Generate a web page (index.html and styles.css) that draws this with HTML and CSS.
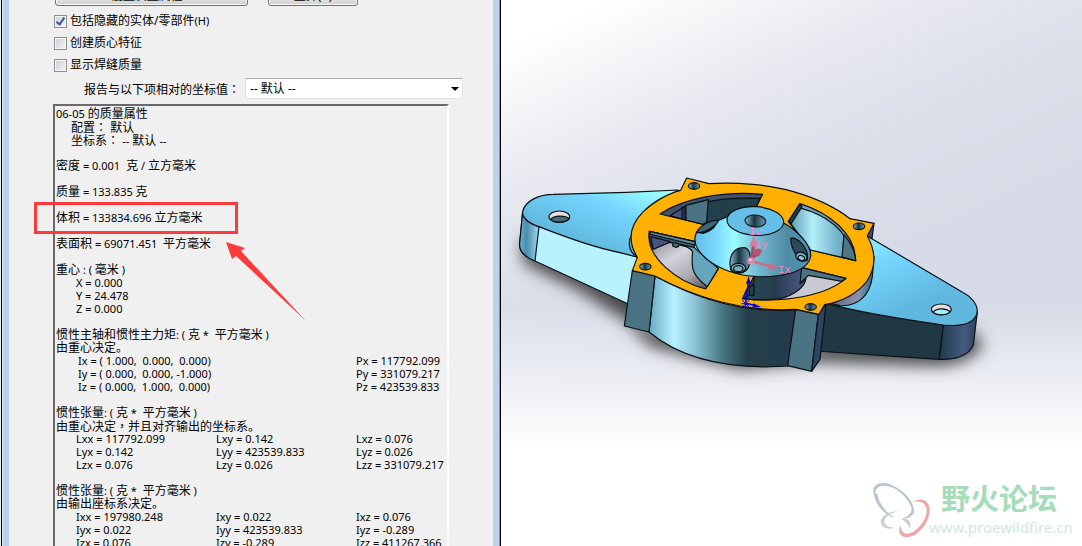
FILE: index.html
```html
<!DOCTYPE html>
<html lang="zh-CN">
<head>
<meta charset="utf-8">
<title>质量属性</title>
<link rel="stylesheet" href="styles.css">
</head>
<body>
<div class="window">
	<div class="dialog">
		<div class="buttons">
			<button type="button" class="btn btn-wide">覆盖质量属性...</button>
			<button type="button" class="btn">重算(R)</button>
		</div>
		<div class="options">
			<label class="check"><input type="checkbox" checked><span>包括隐藏的实体/零部件<span class="n">(H)</span></span></label>
			<label class="check"><input type="checkbox"><span>创建质心特征</span></label>
			<label class="check"><input type="checkbox"><span>显示焊缝质量</span></label>
		</div>
		<div class="coord">
			<label for="coordSys">报告与以下项相对的坐标值<span class="colon" lang="zh-TW">：</span></label>
			<div class="combo">
				<select id="coordSys"><option>-- 默认 --</option></select>
			</div>
		</div>
		<div class="report">
			<p><span class="n">06-05</span> 的质量属性</p>
			<p class="sub">配置<span class="colon" lang="zh-TW">：</span> 默认</p>
			<p class="sub">坐标系<span class="colon" lang="zh-TW">：</span> <span class="n">--</span> 默认 <span class="n">--</span></p>
			<p class="gap">密度<span class="n"> = 0.001 </span> 克<span class="n"> / </span>立方毫米</p>
			<p class="gap">质量<span class="n"> = 133.835 </span>克</p>
			<p class="gap marked">体积<span class="n"> = 133834.696 </span>立方毫米<svg class="arrow" width="82" height="82" viewBox="0 0 82 82"><path d="M0 0L19 6L15 9L80 79L10 14L6 17Z" fill="#fd3b3b"/></svg></p>
			<p class="gap">表面积<span class="n"> = 69071.451  </span>平方毫米</p>
			<p class="gap">重心<span class="n"> : ( </span>毫米<span class="n"> )</span></p>
			<p class="val n">X = 0.000</p>
			<p class="val n">Y = 24.478</p>
			<p class="val n">Z = 0.000</p>
			<p class="gap">惯性主轴和惯性主力矩<span class="n">: ( </span>克<span class="n"> *  </span>平方毫米<span class="n"> )</span></p>
			<p>由重心决定。</p>
			<table class="n axes">
				<tr><td>Ix = ( 1.000,  0.000,  0.000)</td><td>Px = 117792.099</td></tr>
				<tr><td>Iy = ( 0.000,  0.000, -1.000)</td><td>Py = 331079.217</td></tr>
				<tr><td>Iz = ( 0.000,  1.000,  0.000)</td><td>Pz = 423539.833</td></tr>
			</table>
			<p class="gap">惯性张量<span class="n">: ( </span>克<span class="n"> *  </span>平方毫米<span class="n"> )</span></p>
			<p>由重心决定<span class="colon" lang="zh-TW">，</span>并且对齐输出的坐标系。</p>
			<table class="n">
				<tr><td>Lxx = 117792.099</td><td>Lxy = 0.142</td><td>Lxz = 0.076</td></tr>
				<tr><td>Lyx = 0.142</td><td>Lyy = 423539.833</td><td>Lyz = 0.026</td></tr>
				<tr><td>Lzx = 0.076</td><td>Lzy = 0.026</td><td>Lzz = 331079.217</td></tr>
			</table>
			<p class="gap">惯性张量<span class="n">: ( </span>克<span class="n"> *  </span>平方毫米<span class="n"> )</span></p>
			<p>由输出座标系决定。</p>
			<table class="n">
				<tr><td>Ixx = 197980.248</td><td>Ixy = 0.022</td><td>Ixz = 0.076</td></tr>
				<tr><td>Iyx = 0.022</td><td>Iyy = 423539.833</td><td>Iyz = -0.289</td></tr>
				<tr><td>Izx = 0.076</td><td>Izy = -0.289</td><td>Izz = 411267.366</td></tr>
			</table>
		</div>
	</div>
	<div class="view">
		<svg class="model" viewBox="501 0 581 546" preserveAspectRatio="xMidYMid slice">
			<defs>
				<linearGradient id="wingL" x1="0" y1="1" x2="1" y2="0"><stop offset=".3" stop-color="#62b9de"/><stop offset=".65" stop-color="#74d4ff"/><stop offset=".9" stop-color="#98fbff"/></linearGradient>
				<linearGradient id="wingR" x1="0" y1="0" x2=".7" y2="1"><stop offset=".1" stop-color="#98fbff"/><stop offset=".38" stop-color="#76d6ff"/><stop offset=".8" stop-color="#60b8de"/></linearGradient>
				<linearGradient id="endL"><stop offset="0" stop-color="#69b3d2"/><stop offset=".35" stop-color="#4a8cac"/><stop offset="1" stop-color="#9bdcf2"/></linearGradient>
				<linearGradient id="endR"><stop offset="0" stop-color="#213a48"/><stop offset=".65" stop-color="#465a80"/><stop offset="1" stop-color="#2b4258"/></linearGradient>
				<linearGradient id="front"><stop offset="0" stop-color="#67a9c3"/><stop offset=".17" stop-color="#b7f1ff"/><stop offset=".3" stop-color="#90c9d9"/><stop offset=".5" stop-color="#487683"/><stop offset=".67" stop-color="#233f49"/><stop offset="1" stop-color="#243a4c"/></linearGradient>
				<linearGradient id="dome"><stop offset="0" stop-color="#62bde6"/><stop offset=".2" stop-color="#7ddcff"/><stop offset=".34" stop-color="#9bfdff"/><stop offset=".55" stop-color="#73b8d0"/><stop offset=".8" stop-color="#4f8aa3"/><stop offset="1" stop-color="#4f96bc"/></linearGradient>
				<linearGradient id="wallTR"><stop offset="0" stop-color="#5e9db4"/><stop offset=".35" stop-color="#b4eefb"/><stop offset=".7" stop-color="#76b7ce"/><stop offset="1" stop-color="#5b9cb9"/></linearGradient>
				<linearGradient id="hub"><stop offset="0" stop-color="#2b4a58"/><stop offset=".5" stop-color="#233d4c"/><stop offset=".75" stop-color="#3c4a6c"/><stop offset="1" stop-color="#4c5984"/></linearGradient>
				<linearGradient id="ground" x1="0" y1="0" x2=".8" y2="1"><stop offset="0" stop-color="#777"/><stop offset=".45" stop-color="#d3d3dc"/><stop offset=".75" stop-color="#aaaab2"/><stop offset="1" stop-color="#555"/></linearGradient>
				<linearGradient id="rim"><stop offset="0" stop-color="#505b78"/><stop offset=".7" stop-color="#8e93ad"/><stop offset=".8" stop-color="#5a87a0"/><stop offset="1" stop-color="#3b6a86"/></linearGradient>
				<linearGradient id="bore"><stop offset="0" stop-color="#89bdd0"/><stop offset=".45" stop-color="#1c3640"/><stop offset="1" stop-color="#6c9fb9"/></linearGradient>
				<filter id="soft" x="-20%" y="-50%" width="140%" height="200%"><feGaussianBlur stdDeviation="8"/></filter>
			</defs>

			<!-- shadow -->
			<g filter="url(#soft)">
				<path d="M521 238L650 290L640 330L578 290L524 264Z" fill="#484848"/>
				<path d="M815 345L968 330L983 342Q975 364 935 366L815 362L740 369L650 346L630 326Z" fill="#484848"/>
			</g>

			<!-- left arm -->
			<g class="edge" transform="translate(510 160) scale(.33333)">
				<path d="M38 155C38 178 62 192 87 200L385 292L370 440L350 430L75 303C42 290 27 272 29 250Z" fill="#b9f2ff"/>
				<path d="M38 155C38 178 62 192 87 200L75 303C42 290 27 272 29 250Z" fill="url(#endL)"/>
				<path d="M38 155C45 122 88 103 130 103L350 97L505 90L450 220L385 292L330 278C250 262 150 225 87 200C60 190 36 175 38 155Z" fill="url(#wingL)"/>
				<path d="M370 222C352 238 352 276 385 292L400 250Z" fill="#62aace"/>
				<ellipse cx="148" cy="170" rx="31" ry="17" fill="#e9dfe3"/>
				<path d="M122 178C132 166 165 165 177 176C170 188 133 190 122 178Z" fill="#42707e"/>
			</g>

			<!-- right arm -->
			<g class="edge" transform="translate(820 160) scale(.33333)">
				<path d="M0 415L18 430L370 495L358 598L-15 573Z" fill="#203744"/>
				<path d="M370 495C420 500 466 488 472 455L460 555C445 590 400 600 358 598Z" fill="url(#endR)"/>
				<path d="M120 215L430 398C462 415 480 445 468 468C455 492 420 500 370 495C250 478 130 460 18 430Z" fill="url(#wingR)"/>
				<path d="M162 190L156 236L138 226L142 205Z" fill="#34506f"/>
				<path d="M162 290L157 350C150 405 115 440 60 437L10 425L80 340Z" fill="url(#rim)"/>
				<ellipse cx="364" cy="448" rx="30" ry="16" fill="#e9dfe3"/>
				<path d="M339 456C350 444 376 443 391 455C380 467 350 468 339 456Z" fill="#a2f1fb"/>
			</g>

			<g class="edge" transform="translate(620 170) scale(.33333)">
				<!-- body walls -->
				<path d="M105 318C200 370 350 432 527 420L505 588C330 600 190 570 87 486Z" fill="url(#front)"/>
				<path d="M37 302L105 318L87 486L13 468Z" fill="#4a7484"/>
				<path d="M527 418L595 433L575 604L503 587Z" fill="#4a7484"/>
				<path d="M595 433L618 402L600 568L575 604Z" fill="#2c4563"/>

				<!-- cut face -->
				<path d="M200 24L267 41C350 35 450 45 520 65C600 88 650 115 690 146L762 160L742 198C768 245 770 290 740 335C710 372 665 395 614 404L597 433L527 418C360 428 210 375 105 318L37 302L52 262C20 210 30 165 70 125C100 95 145 70 182 61Z" fill="#ffb000"/>

				<!-- rear left opening -->
				<path d="M120 132C190 85 310 62 428 73L410 108C370 108 330 125 322 140L295 160L257 165Z" fill="#3f5369"/>
				<path d="M150 137C210 100 300 80 420 85L410 108C370 108 330 125 322 140L295 160L250 162Z" fill="#233f4c"/>
				<path d="M150 137L198 107L198 150Z" fill="#46557f"/>
				<path d="M198 106L265 89L260 155L250 163L198 150Z" fill="#4a7484"/>
				<path d="M186 110V146M192 108V148" fill="none"/>

				<!-- rear right opening -->
				<path d="M540 101C630 130 705 190 707 272L572 240L505 155Z" fill="#72aabb"/>
				<path d="M537 113C620 135 680 180 698 254L707 272L572 240L510 158Z" fill="url(#wallTR)"/>
				<path d="M672 194C690 215 705 240 707 272L666 261Z" fill="#4a7885"/>
				<path d="M540 101L546 110L514 160L505 155Z" fill="#20404f"/>

				<!-- front left opening -->
				<path d="M88 184L225 215L295 296L257 357C170 335 75 260 88 184Z" fill="url(#ground)"/>
				<path d="M88 184L225 215L222 236L150 217L100 237C90 220 86 205 88 184Z" fill="#456478"/>
				<path d="M92 200L152 215L100 238Z" fill="#46557f"/>
				<path d="M88 184L225 215L225 225L92 193Z" fill="#5c8f9f"/>
				<path d="M158 217L176 221L176 229L167 232L158 228Z" fill="#46717b"/>

				<!-- front right opening -->
				<path d="M402 320L545 293L678 325C620 375 500 400 368 386Z" fill="#c9c9d3"/>
				<path d="M545 293L678 325L666 334L565 316L535 345Z" fill="#4b7581"/>

				<!-- hub -->
				<path d="M180 223Q205 228 218 245C212 300 220 318 262 350L295 296L222 232Z" fill="#65a6bd"/>
				<path d="M402 320L545 290L540 342L558 325C555 350 525 375 480 386C440 392 405 390 368 386Z" fill="url(#hub)"/>
				<path d="M402 335L388 375L368 386L378 362L402 320Z" fill="#29495a"/>
				<path d="M388 352L402 343V376L388 375Z" fill="#24404b"/>
				<path d="M322 140L250 170C222 180 218 215 235 240C270 290 340 315 410 320C490 322 565 305 572 258C575 225 530 180 490 158Z" fill="url(#dome)"/>
				<path d="M230 188C240 165 275 148 295 152C288 170 255 190 230 188Z" fill="#3b6677"/>
				<path d="M240 188Q260 188 286 165Q280 180 250 190Z" fill="#a1def0"/>
				<ellipse cx="406" cy="153" rx="85" ry="43" transform="rotate(3 406 153)" fill="#65bfe7"/>
				<ellipse cx="406" cy="153" rx="31" ry="18" transform="rotate(4 406 153)" fill="url(#bore)"/>
				<path d="M332 298C324 260 340 230 375 233C395 240 395 285 378 302C365 315 335 310 332 298Z" fill="url(#bore)"/>
				<ellipse cx="355" cy="294" rx="22" ry="14" fill="#79adbd"/>
				<ellipse cx="355" cy="296" rx="14" ry="9" fill="#78aebd"/>
				<path d="M512 205C530 200 568 232 562 270C545 282 513 245 512 205Z" fill="#294b5b"/>
				<ellipse cx="544" cy="260" rx="17" ry="13" transform="rotate(20 544 260)" fill="#78aebd"/>
				<ellipse cx="544" cy="264" rx="10" ry="7" transform="rotate(20 544 264)" fill="#8ec7d8"/>

				<!-- screw holes -->
				<g fill="url(#bore)">
					<ellipse cx="222" cy="48" rx="17" ry="10"/>
					<ellipse cx="717" cy="169" rx="17" ry="10"/>
					<ellipse cx="76" cy="290" rx="17" ry="10"/>
					<ellipse cx="572" cy="411" rx="17" ry="10"/>
				</g>
			</g>

			<!-- principal axes -->
			<g transform="translate(620 170) scale(.33333)">
				<path d="M393 272L401 225M393 272L412 246" stroke="#a6506c" stroke-width="10"/>
				<path d="M393 272L450 289" stroke="#c96c8c" stroke-width="8"/>
				<path d="M402 196L412 230L388 229Z" fill="#dc7a9d"/>
				<path d="M400 242Q414 230 425 241Q425 254 411 262Z" fill="#b65373"/>
				<path d="M476 294L445 299L452 279Z" fill="#c96c8c"/>
				<circle cx="393" cy="273" r="11" fill="#d98aa6"/>
				<circle cx="391" cy="270" r="4" fill="#ffd6e4"/>
				<path d="M377 401L384 340M377 401L400 405" stroke="#0000f0" stroke-width="4"/>
				<path d="M386 318L392 341L378 341ZM424 411L397 413L400 400Z" fill="#0000f0"/>
				<path d="M364 401H391M377 388V414M367 391L387 411M387 391L367 411" stroke="#0000f0" stroke-width="3"/>
			</g>
			<g class="axis">
				<text x="749" y="235">Iz</text>
				<text x="755" y="248">Iy</text>
				<text x="778" y="273">Ix</text>
			</g>

			<!-- forum watermark -->
			<g transform="translate(860 470) scale(.33333)">
				<path fill-rule="evenodd" fill="#b8c4cf" d="M42 75C32 45 60 30 95 45C140 65 170 105 160 138C158 100 125 60 90 50C60 42 42 52 47 80Z"/>
				<path fill="#b8c4cf" d="M42 72C45 105 75 135 105 145C80 130 55 100 52 70ZM125 145C145 148 160 140 162 118L155 115C155 130 145 142 125 145Z"/>
				<path fill="#efa5a9" d="M160 96C185 78 212 95 209 125C205 165 165 210 130 200C115 195 115 180 122 165C122 185 135 195 150 190C180 178 203 140 200 118C197 98 180 92 160 96Z"/>
				<path fill="#c9cfd8" d="M118 124C85 122 60 140 63 160C66 175 85 178 105 174C85 172 72 165 73 154C76 138 95 128 118 124ZM122 148Q140 152 148 175Q155 160 145 150Q135 143 122 148Z"/>
			</g>
			<text class="mark" x="941" y="510">野火论坛</text>
			<text class="mark-url" x="929" y="533">www.proewildfire.cn</text>
		</svg>
	</div>
</div>
</body>
</html>
```
FILE: styles.css
```css
*,
*:before,
*:after{
	box-sizing:border-box;
}
body{
	margin:0;
	background-color:#f0f0f0;
	color:#000;
	font-family:"Noto Sans","Noto Sans CJK SC",sans-serif;
	font-size:12px;
}
.window{
	display:grid;
	grid-template-columns:501fr 581fr;
	height:100vh;
	overflow:hidden;
}
.n{
	font-size:11px;
}
.colon{
	font-family:"Noto Sans CJK TC",sans-serif;
}

/* dialog */
.dialog{
	margin-left:1px;
	padding:0 37px 0 46px;
	border-left:1px solid #000;
	border-right:1px solid #000;
	box-shadow:inset 1px 0 #d5eef8,inset 7px 0 #bad2ea,inset -1px 0 #30b8dc,inset -7px 0 #bad2ea;
	background-color:#f0f0f0;
	min-width:0;
	overflow:hidden;
}
.buttons{
	display:flex;
	gap:20px;
	margin:-17px 0 0 7px;
}
.btn{
	flex:none;
	width:90px;
	height:23px;
	padding:2px 0 0;
	border:1px solid #707070;
	border-radius:3px;
	background:linear-gradient(#f2f2f2 50%,#cfcfcf);
	box-shadow:inset 0 0 0 1px #fbfbfb;
	font:inherit;
	line-height:20px;
}
.btn-wide{
	width:193px;
}
.options{
	margin:4px 0 0 6px;
}
.check{
	display:flex;
	align-items:center;
	gap:3px;
	height:22px;
	line-height:18px;
}
.check input{
	appearance:none;
	width:13px;
	height:13px;
	margin:0;
	border:1px solid #8e8f8f;
	background:linear-gradient(135deg,#cbcfd5,#f6f6f6);
	box-shadow:inset 0 0 0 1px #f4f4f4;
	position:relative;
}
.check input:checked:after{
	content:"";
	position:absolute;
	left:3px;
	top:0;
	width:5px;
	height:9px;
	border:solid #40529c;
	border-width:0 2px 2px 0;
	transform:rotate(35deg);
}
.coord{
	display:flex;
	align-items:center;
	margin:2px 0 0 36px;
}
.coord label{
	flex:none;
	width:161px;
	white-space:nowrap;
}
.combo{
	flex:1;
	position:relative;
}
.combo select{
	appearance:none;
	display:block;
	width:100%;
	height:21px;
	padding:0 4px;
	border:1px solid #e2e3ea;
	border-top-color:#abadb3;
	border-radius:0;
	background-color:#fff;
	color:#000;
	font:inherit;
}
.combo:after{
	content:"";
	position:absolute;
	right:4px;
	top:9px;
	border:4px solid transparent;
	border-top-color:#000;
	border-bottom:0;
	pointer-events:none;
}

/* report */
.report{
	margin:5px 14px 0 5px;
	padding:1px 0 0 1px;
	border:2px solid #696969;
	border-color:#696969 #fff #fff #696969;
	line-height:13px;
}
.report p{
	height:13px;
	margin:0;
	white-space:pre;
}
.report .gap{
	margin-top:13px;
}
.report .sub{
	padding-left:15px;
}
.report .val{
	padding-left:20px;
}
.report table{
	margin-left:20px;
	border-collapse:collapse;
}
.report td{
	min-width:140px;
	height:13px;
	padding:0;
	white-space:pre;
}
.report td:last-child{
	min-width:0;
}
.report .axes{
	margin-left:22px;
}
.report .axes td:first-child{
	min-width:278px;
}
.report .marked{
	position:relative;
}
.marked:before{
	content:"";
	position:absolute;
	left:-22px;
	top:-9px;
	width:204px;
	height:32px;
	border:3px solid #fd3b3b;
}
.arrow{
	position:absolute;
	left:170px;
	top:31px;
	z-index:1;
}

/* graphics area */
.view{
	min-width:0;
	overflow:hidden;
	background:linear-gradient(rgba(255,255,255,0) 56%,#fff 82%),linear-gradient(155deg,#fff 6%,#e8e9f0 24%,#dcdfea 38%,#d7dbe7 55%);
}
.model{
	display:block;
	width:100%;
	height:100%;
}
.edge{
	stroke:#0a1014;
	stroke-width:3.5;
	stroke-linejoin:round;
}
.axis{
	fill:#ff80c0;
	font-family:"Liberation Mono",monospace;
	font-size:11px;
}
.mark{
	fill:#a5dcba;
	font-family:"Noto Sans CJK SC",sans-serif;
	font-size:29px;
	font-weight:700;
}
.mark-url{
	fill:#cfe9e2;
	font-size:15px;
}
```
